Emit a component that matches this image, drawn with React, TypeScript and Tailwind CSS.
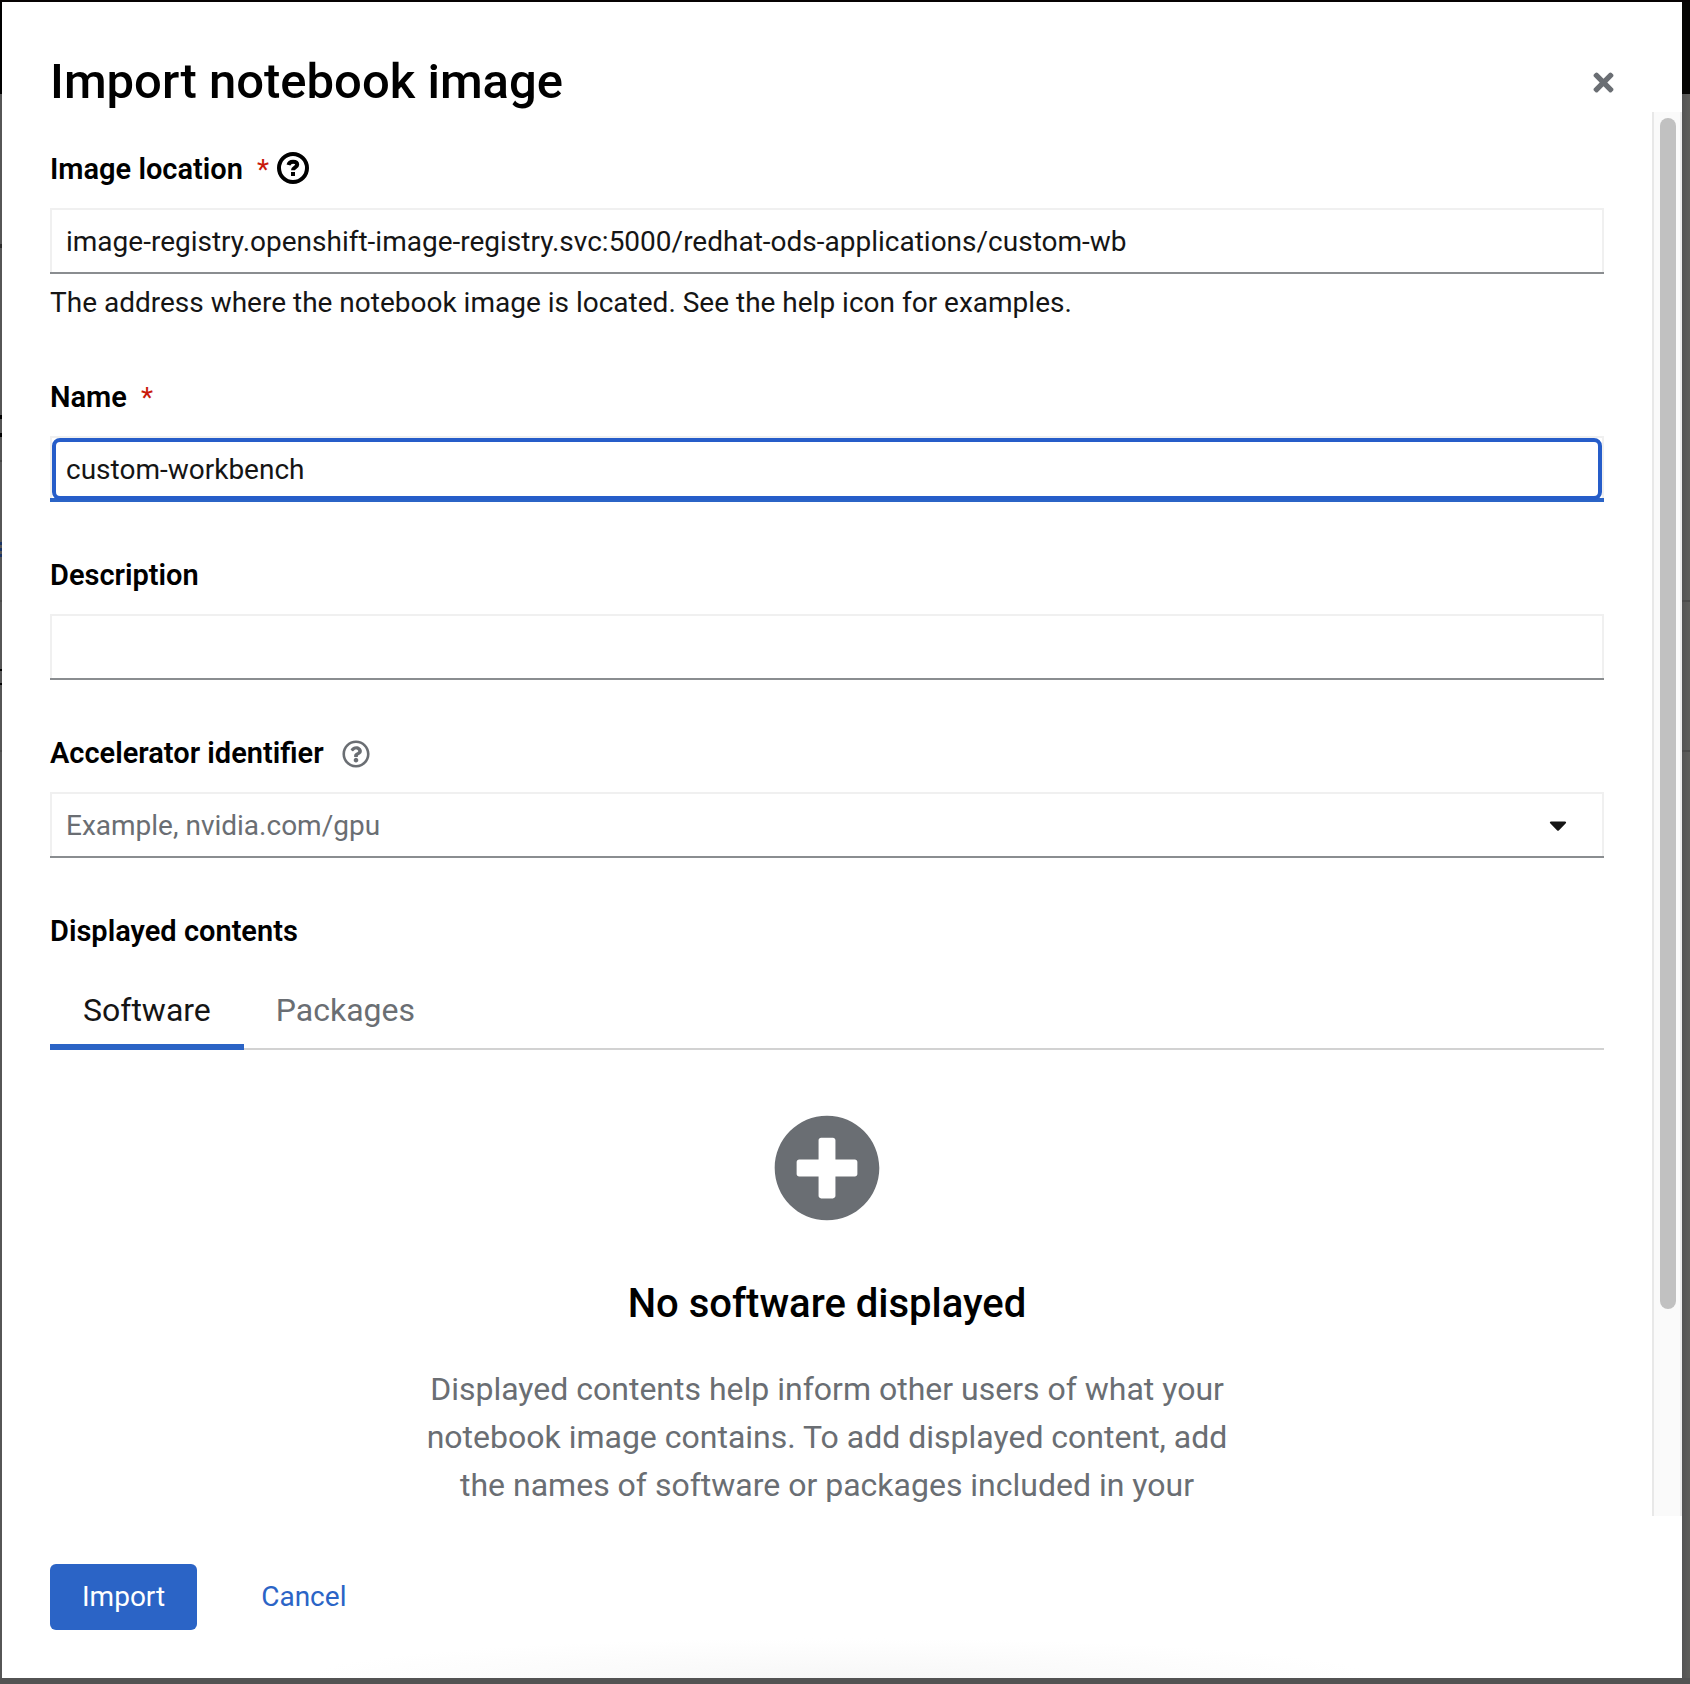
import React, { useState } from "react";
import { FaCaretDown, FaPlusCircle, FaRegQuestionCircle, FaTimes } from "react-icons/fa";

/* Slivers of the dimmed page that show on the left of the dialog. */
function LeftRail() {
  return (
    <div aria-hidden="true" className="flex w-0.5 shrink-0 flex-col bg-[#565656]">
      <div className="h-[92px] bg-black" />
      <div className="mt-[150px] h-1 bg-[#2b2b2b]" />
      <div className="mt-[167px] h-1 bg-black" />
      <div className="mt-[14px] h-1 bg-black" />
      <div className="mt-[23px] h-0.5 bg-[#434343]" />
      <div className="mt-20 h-[3px] bg-[#1b3566]" />
      <div className="mt-[3px] h-[3px] bg-[#1b3566]" />
      <div className="mt-[3px] h-[3px] bg-[#1b3566]" />
      <div className="mt-[43px] h-0.5 bg-[#4a4a4a]" />
      <div className="mt-[67px] h-0.5 bg-black" />
      <div className="mt-3 h-0.5 bg-black" />
      <div className="mt-[65px] h-0.5 bg-[#4a4a4a]" />
    </div>
  );
}

/* Slivers of the dimmed page on the right. */
function RightRail() {
  return (
    <div aria-hidden="true" className="flex w-2 shrink-0 flex-col bg-linear-to-r from-[#545454] to-[#5e5e5b]">
      <div className="h-[92px] bg-[#060604]" />
      <div className="mt-[506px] h-0.5 bg-[#4b4b4a]" />
      <div className="mt-[148px] h-0.5 bg-[#4b4b4a]" />
    </div>
  );
}

function HelpMark() {
  return (
    <svg viewBox="0 0 32 32" className="size-8" aria-hidden="true">
      <circle cx="16" cy="16" r="14" fill="none" stroke="#000" strokeWidth="4" />
      <path d="M11.500 13C12 10.800 13.600 9.800 16 9.800c2.700 0 4.200 1.200 4.200 3 0 2.600-4.200 2.600-4.200 5.400" fill="none" stroke="#000" strokeWidth="4" />
      <path d="M14 20h4v4h-4z" />
    </svg>
  );
}

type TextBoxProps = React.InputHTMLAttributes<HTMLInputElement> & { children?: React.ReactNode };

function TextBox({ children, ...rest }: TextBoxProps) {
  return (
    <div className="border-b-2 border-[#8a8d90]">
      <div className="flex h-16 items-center border-2 border-b-0 border-[#f0f0f0]">
        <input
          {...rest}
          className="h-full min-w-0 flex-1 bg-white px-[14px] text-[28px] text-[#151515] outline-none placeholder:text-[#6a6e73]"
        />
        {children}
      </div>
    </div>
  );
}

type FieldProps = {
  id: string;
  label: string;
  required?: boolean;
  help?: React.ReactNode;
  children: React.ReactNode;
};

function Field({ id, label, required, help, children }: FieldProps) {
  return (
    <div>
      <div className="mb-3 flex h-13 items-center">
        <label htmlFor={id} className="flex items-center text-[29px] font-semibold text-black">
          {label}
          {required && <span className="ml-[14px] text-[28px] font-normal text-[#c9190b]">*</span>}
        </label>
        {help}
      </div>
      {children}
    </div>
  );
}

export default function App() {
  const [location, setLocation] = useState(
    "image-registry.openshift-image-registry.svc:5000/redhat-ods-applications/custom-wb",
  );
  const [name, setName] = useState("custom-workbench");

  return (
    <div className="flex h-screen flex-col bg-[#535353] pb-1.5 font-['Roboto',sans-serif] text-[#151515]">
      <div className="h-0.5 shrink-0 bg-[#060303]" />
      <div className="flex min-h-0 flex-1">
        <LeftRail />
        <div role="dialog" aria-labelledby="dialog-title" className="flex min-w-0 flex-1 flex-col bg-white">
          <header className="flex items-center justify-between pt-12 pr-16 pl-12">
            <h1 id="dialog-title" className="pt-0.5 text-[49px] leading-[60px] font-medium text-black">
              Import notebook image
            </h1>
            <button type="button" aria-label="Close" className="pt-0.5 text-[#6a6e73]">
              <FaTimes size={29} />
            </button>
          </header>

          <div className="flex min-h-0 flex-1">
            <form className="min-w-0 flex-1 overflow-hidden px-12 pt-8">
              <Field
                id="location"
                label="Image location"
                required
                help={
                  <button type="button" aria-label="More info for image location" className="mb-1 ml-2">
                    <HelpMark />
                  </button>
                }
              >
                <TextBox id="location" value={location} onChange={(e) => setLocation(e.target.value)} />
                <p className="mt-2 mb-12 text-[28px] leading-[42px]">
                  The address where the notebook image is located. See the help icon for examples.
                </p>
              </Field>

              <div className="flex flex-col gap-12">
                <Field id="name" label="Name" required>
                  <div className="relative border-b-4 border-[#2b64c6]">
                    <input
                      id="name"
                      className="block h-[62px] w-full border-2 border-b-0 border-[#f0f0f0] bg-white px-[14px] pt-0.5 text-[28px] text-[#151515] outline-none"
                      value={name}
                      onChange={(e) => setName(e.target.value)}
                    />
                    {/* Focus ring, overlapping the bottom rule */}
                    <span className="pointer-events-none absolute inset-x-0.5 top-0.5 -bottom-0.5 rounded-lg border-4 border-[#265dc9]" />
                  </div>
                </Field>

                <Field id="description" label="Description">
                  <TextBox id="description" />
                </Field>

                <Field
                  id="accelerator"
                  label="Accelerator identifier"
                  help={
                    <button type="button" aria-label="More info for accelerator identifier" className="ml-[18px] text-[#6a6e73]">
                      <FaRegQuestionCircle size={28} />
                    </button>
                  }
                >
                  <TextBox id="accelerator" placeholder="Example, nvidia.com/gpu">
                    <button type="button" aria-label="Options" className="px-[30px] text-[#151515]">
                      <FaCaretDown size={28} />
                    </button>
                  </TextBox>
                </Field>

                <div>
                  <h2 className="mb-3 flex h-13 items-center text-[29px] font-semibold text-black">Displayed contents</h2>
                  <div role="tablist" className="flex h-20 border-b-2 border-[#d2d2d2] text-[32px]">
                    <button role="tab" type="button" aria-selected="true" className="-mb-0.5 border-b-6 border-[#2b64c6] px-[33px] pt-1.5 text-[#151515]">
                      Software
                    </button>
                    <button role="tab" type="button" aria-selected="false" className="px-8 pt-0.5 text-[#6a6e73]">
                      Packages
                    </button>
                  </div>

                  <div role="tabpanel" className="flex flex-col items-center pt-16 text-center">
                    <FaPlusCircle size={108} className="text-[#6a6e73]" />
                    <h3 className="mt-14 text-[40px] leading-[52px] font-medium text-black">No software displayed</h3>
                    <p className="mt-[35px] max-w-[816px] text-[32px] leading-[48px] text-[#6a6e73]">
                      Displayed contents help inform other users of what your notebook image contains. To add displayed
                      content, add the names of software or packages included in your
                    </p>
                  </div>
                </div>
              </div>
            </form>

            {/* Scroll bar track and thumb */}
            <div aria-hidden="true" className="flex w-[30px] shrink-0 flex-col items-center border-x-2 border-l-[#e8e8e8] border-r-[#ededed] bg-[#fafafa] pt-1.5 pl-0.5">
              <div className="h-[85.2%] w-4 rounded-full bg-[#c1c1c1]" />
            </div>
          </div>

          <footer className="flex items-center gap-8 bg-[radial-gradient(32%_40px_at_50%_100%,#f7f7f7,#ffffff)] p-12 text-[28px]">
            <button type="button" className="h-[66px] rounded-md bg-[#2b64c6] px-8 text-white">
              Import
            </button>
            <button type="button" className="h-[66px] px-8 text-[#2b64c6]">
              Cancel
            </button>
          </footer>
        </div>
        <RightRail />
      </div>
    </div>
  );
}
